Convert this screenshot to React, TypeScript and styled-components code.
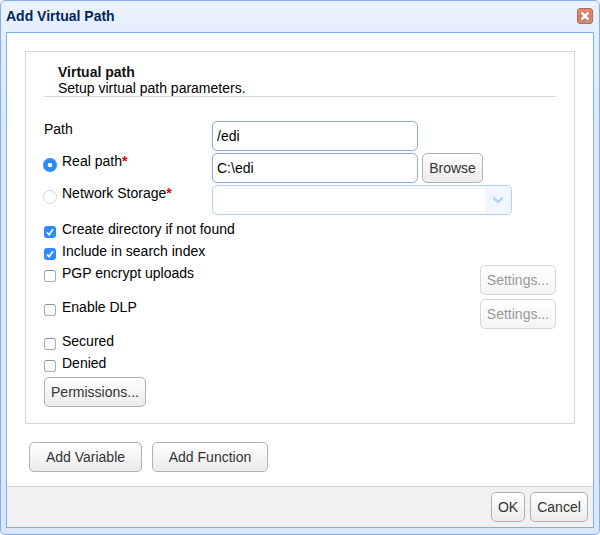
import React from 'react';
import styled, { createGlobalStyle } from 'styled-components';

const GlobalStyle = createGlobalStyle`
  *, *::before, *::after { box-sizing: border-box; }
  html, body { margin: 0; padding: 0; background: #fff; }
  body, input, button { font-family: "Liberation Sans", Arial, Helvetica, sans-serif; font-size: 14px; }
`;

const Window = styled.div`
  width: 600px;
  height: 535px;
  display: flex;
  flex-direction: column;
  padding: 0 5px 6px;
  border: 1px solid #85aee5;
  border-radius: 5px;
  background: linear-gradient(#ebf2fe 0, #e5eeff 33px, #dae8fd 130px, #dae8fd 100%);
  color: #000;
`;

const TitleBar = styled.header`
  flex: none;
  height: 31px;
  display: flex;
  justify-content: space-between;
  align-items: flex-start;
  padding: 7px 1px 0 0;
`;

const Title = styled.h1`
  margin: 0;
  font-size: 14px;
  line-height: 16px;
  font-weight: bold;
  color: #04265c;
`;

const CloseButton = styled.button`
  width: 16px;
  height: 16px;
  padding: 0;
  border: 0;
  background: none;
  svg { display: block; }
`;

const Frame = styled.main`
  flex: 1;
  display: flex;
  flex-direction: column;
  border: 1px solid #85aee5;
  background: #fff;
`;

const Content = styled.div`
  flex: 1;
  padding: 18px 18px 0;
`;

const Panel = styled.section`
  height: 373px;
  padding: 12px 18px 0;
  border: 1px solid #d6d6d6;
`;

const PanelHeader = styled.div`
  height: 33px;
  margin-bottom: 24px;
  padding-left: 14px;
  border-bottom: 1px solid #d6d6d6;
  line-height: 16px;
`;

const Heading = styled.h2`
  margin: 0;
  font-size: 14px;
  line-height: 16px;
  color: #111;
`;

const Row = styled.div<{ $height: number }>`
  display: flex;
  align-items: flex-start;
  height: ${(p) => p.$height}px;
`;

const Caption = styled.div<{ $wide?: boolean }>`
  flex: none;
  width: ${(p) => (p.$wide ? '400px' : '168px')};
  display: flex;
  align-items: flex-start;
`;

const Label = styled.label<{ $indent?: number }>`
  margin-left: ${(p) => p.$indent ?? 0}px;
  line-height: 16px;
  white-space: nowrap;
`;

const Required = styled.span`
  font-weight: bold;
  color: #e60000;
`;

const Radio = styled.input.attrs({ type: 'radio', name: 'storage' })`
  appearance: none;
  flex: none;
  width: 14px;
  height: 14px;
  margin: 5px 0 0 -1px;
  border-radius: 50%;
  border: 1px solid #d5d5d5;
  background: #fff;
  &:checked {
    border: 0;
    background: radial-gradient(circle, #fff 0, #fff 1.9px, #2f8bfd 2.6px);
  }
`;

const CheckWrap = styled.span`
  flex: none;
  display: grid;
  width: 12px;
  height: 12px;
  margin-top: 5px;
  > * { grid-area: 1 / 1; }
  svg { pointer-events: none; }
`;

const CheckInput = styled.input.attrs({ type: 'checkbox' })`
  appearance: none;
  width: 12px;
  height: 12px;
  margin: 0;
  border: 1px solid #ababab;
  border-top-color: #8f8f8f;
  border-radius: 3px;
  background: #fff;
  &:checked {
    border: 0;
    background: #2f8bfd;
  }
`;

const TextField = styled.input.attrs({ type: 'text' })`
  width: 206px;
  height: 30px;
  margin: 0;
  padding: 0 4px 1px;
  border: 1px solid #85aee5;
  border-radius: 5px;
  outline: 0;
  color: #000;
`;

const Combo = styled.div`
  width: 300px;
  height: 30px;
  display: flex;
  justify-content: flex-end;
  border: 1px solid #b5cff0;
  border-radius: 5px;
  overflow: hidden;
`;

const ComboTrigger = styled.div`
  width: 26px;
  display: flex;
  align-items: center;
  justify-content: center;
  background: #f0f5ff;
`;

const Button = styled.button<{ $width: number; $gap?: number }>`
  flex: none;
  width: ${(p) => p.$width}px;
  height: 30px;
  margin: 0 0 0 ${(p) => p.$gap ?? 0}px;
  padding: 0;
  border: 1px solid #b0b0b0;
  border-radius: 5px;
  background: linear-gradient(#fff, #ebebeb);
  line-height: 18px;
  white-space: nowrap;
  color: #333;
  &:disabled {
    border-color: #d7d7d7;
    background: linear-gradient(#fff, #f4f4f4);
    color: #999;
  }
`;

const Actions = styled.div`
  display: flex;
  padding: 18px 0 0 4px;
`;

const Footer = styled.footer`
  flex: none;
  height: 41px;
  display: flex;
  justify-content: flex-end;
  padding: 5px 5px 0 0;
  border-top: 1px solid #d2d2d2;
  background: #f1f1f1;
`;

function CheckRow({ label, checked, height = 22, settings }: {
  label: string; checked?: boolean; height?: number; settings?: boolean;
}) {
  const id = label.toLowerCase().replace(/ /g, '-');
  return (
    <Row $height={height}>
      <Caption $wide>
        <CheckWrap>
          <CheckInput id={id} defaultChecked={checked} />
          {checked && (
            <svg width="12" height="12" viewBox="0 0 12 12">
              <path d="M3 6.4 5.1 8.7 9 3.2" fill="none" stroke="#fff" strokeWidth="1.6" />
            </svg>
          )}
        </CheckWrap>
        <Label htmlFor={id} $indent={6}>{label}</Label>
      </Caption>
      {settings && <Button $width={76} $gap={36} disabled>Settings...</Button>}
    </Row>
  );
}

export default function App() {
  return (
    <>
      <GlobalStyle />
      <Window>
        <TitleBar>
          <Title>Add Virtual Path</Title>
          <CloseButton aria-label="Close">
            <svg width="16" height="16" viewBox="0 0 16 16">
              <defs>
                <linearGradient id="closeFill" x1="0" y1="0" x2="0" y2="1">
                  <stop offset="0" stopColor="#e58a72" />
                  <stop offset="0.5" stopColor="#dc7c60" />
                  <stop offset="1" stopColor="#cd9276" />
                </linearGradient>
              </defs>
              <rect x="0.5" y="0.5" width="15" height="15" rx="2.5" fill="url(#closeFill)" stroke="#b9695c" />
              <path d="m4.8 4.8 6.4 6.4M11.2 4.8l-6.4 6.4" stroke="#b9695c" strokeOpacity="0.5" strokeWidth="4" />
              <path d="m4.6 4.6 6.8 6.8M11.4 4.6l-6.8 6.8" stroke="#fff" strokeWidth="2.5" />
            </svg>
          </CloseButton>
        </TitleBar>
        <Frame>
          <Content>
            <Panel>
              <PanelHeader>
                <Heading>Virtual path</Heading>
                Setup virtual path parameters.
              </PanelHeader>
              <Row $height={32}>
                <Caption><Label htmlFor="path">Path</Label></Caption>
                <TextField id="path" defaultValue="/edi" />
              </Row>
              <Row $height={32}>
                <Caption>
                  <Radio id="real" defaultChecked />
                  <Label htmlFor="real" $indent={5}>Real path<Required>*</Required></Label>
                </Caption>
                <TextField defaultValue="C:\edi" />
                <Button $width={61} $gap={4}>Browse</Button>
              </Row>
              <Row $height={36}>
                <Caption>
                  <Radio id="network" />
                  <Label htmlFor="network" $indent={5}>Network Storage<Required>*</Required></Label>
                </Caption>
                <Combo>
                  <ComboTrigger>
                    <svg width="12" height="8" viewBox="0 0 12 8">
                      <path d="m1.3 1.8 4.7 4.2 4.7-4.2" fill="none" stroke="#a9d0f5" strokeWidth="2.2" />
                    </svg>
                  </ComboTrigger>
                </Combo>
              </Row>
              <CheckRow label="Create directory if not found" checked />
              <CheckRow label="Include in search index" checked />
              <CheckRow label="PGP encrypt uploads" height={34} settings />
              <CheckRow label="Enable DLP" height={34} settings />
              <CheckRow label="Secured" />
              <CheckRow label="Denied" />
              <Button $width={102}>Permissions...</Button>
            </Panel>
            <Actions>
              <Button $width={113}>Add Variable</Button>
              <Button $width={116} $gap={10}>Add Function</Button>
            </Actions>
          </Content>
          <Footer>
            <Button $width={34}>OK</Button>
            <Button $width={58} $gap={5}>Cancel</Button>
          </Footer>
        </Frame>
      </Window>
    </>
  );
}
